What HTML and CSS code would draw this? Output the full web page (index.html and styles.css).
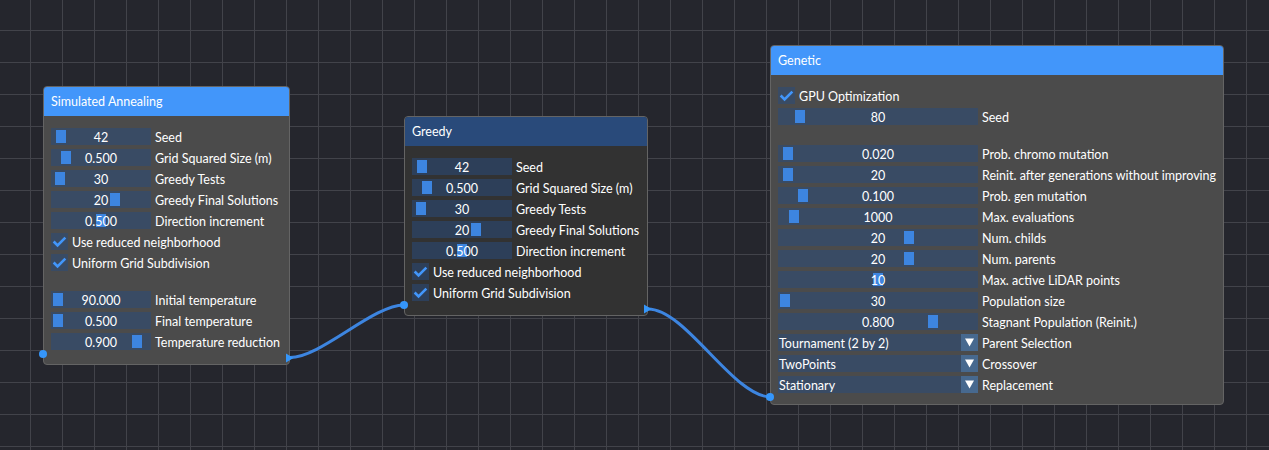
FILE: index.html
```html
<!DOCTYPE html>
<html>
<head>
<meta charset="utf-8">
<title>Node editor</title>
<link rel="stylesheet" href="styles.css">
</head>
<body>
<div class="canvas">
  <svg class="links" width="1269" height="450" viewBox="0 0 1269 450">
    <path d="M290 357.5 C321 357.5 373 305 404 305"/>
    <path d="M648 309 C686 309 733 397 771 397"/>
  </svg>

  <div class="node node-sa">
    <div class="title">Simulated Annealing</div>
    <div class="body">
      <div class="row"><div class="frame"><span class="grab" style="left:5px"></span><span class="val">42</span></div><span class="label">Seed</span></div>
      <div class="row"><div class="frame"><span class="grab" style="left:10px"></span><span class="val">0.500</span></div><span class="label">Grid Squared Size (m)</span></div>
      <div class="row"><div class="frame"><span class="grab" style="left:4px"></span><span class="val">30</span></div><span class="label">Greedy Tests</span></div>
      <div class="row"><div class="frame"><span class="grab" style="left:59px"></span><span class="val">20</span></div><span class="label">Greedy Final Solutions</span></div>
      <div class="row"><div class="frame"><span class="grab" style="left:45px"></span><span class="val">0.500</span></div><span class="label">Direction increment</span></div>
      <div class="row"><span class="check"><svg width="17" height="17" viewBox="0 0 17 17"><polyline points="2.65,8.5 6.55,12.4 14.35,4.6"/></svg></span><span class="label">Use reduced neighborhood</span></div>
      <div class="row"><span class="check"><svg width="17" height="17" viewBox="0 0 17 17"><polyline points="2.65,8.5 6.55,12.4 14.35,4.6"/></svg></span><span class="label">Uniform Grid Subdivision</span></div>
      <div class="spacer"></div>
      <div class="row"><div class="frame"><span class="grab" style="left:2px"></span><span class="val">90.000</span></div><span class="label">Initial temperature</span></div>
      <div class="row"><div class="frame"><span class="grab" style="left:2px"></span><span class="val">0.500</span></div><span class="label">Final temperature</span></div>
      <div class="row"><div class="frame"><span class="grab" style="left:81px"></span><span class="val">0.900</span></div><span class="label">Temperature reduction</span></div>
    </div>
    <div class="pins pins-io">
      <span class="pin-in"></span>
      <svg class="pin-out" width="10" height="10" viewBox="0 0 10 10"><polygon points="1,0.5 1,9.5 8.5,5"/></svg>
    </div>
  </div>

  <div class="node node-greedy idle">
    <div class="title">Greedy</div>
    <div class="body">
      <div class="row"><div class="frame"><span class="grab" style="left:5px"></span><span class="val">42</span></div><span class="label">Seed</span></div>
      <div class="row"><div class="frame"><span class="grab" style="left:10px"></span><span class="val">0.500</span></div><span class="label">Grid Squared Size (m)</span></div>
      <div class="row"><div class="frame"><span class="grab" style="left:4px"></span><span class="val">30</span></div><span class="label">Greedy Tests</span></div>
      <div class="row"><div class="frame"><span class="grab" style="left:59px"></span><span class="val">20</span></div><span class="label">Greedy Final Solutions</span></div>
      <div class="row"><div class="frame"><span class="grab" style="left:45px"></span><span class="val">0.500</span></div><span class="label">Direction increment</span></div>
      <div class="row"><span class="check"><svg width="17" height="17" viewBox="0 0 17 17"><polyline points="2.65,8.5 6.55,12.4 14.35,4.6"/></svg></span><span class="label">Use reduced neighborhood</span></div>
      <div class="row"><span class="check"><svg width="17" height="17" viewBox="0 0 17 17"><polyline points="2.65,8.5 6.55,12.4 14.35,4.6"/></svg></span><span class="label">Uniform Grid Subdivision</span></div>
    </div>
    <div class="pins pins-io">
      <span class="pin-in"></span>
      <svg class="pin-out" width="10" height="10" viewBox="0 0 10 10"><polygon points="1,0.5 1,9.5 8.5,5"/></svg>
    </div>
  </div>

  <div class="node node-genetic">
    <div class="title">Genetic</div>
    <div class="body">
      <div class="row"><span class="check"><svg width="17" height="17" viewBox="0 0 17 17"><polyline points="2.65,8.5 6.55,12.4 14.35,4.6"/></svg></span><span class="label">GPU Optimization</span></div>
      <div class="row"><div class="frame wide"><span class="grab" style="left:17px"></span><span class="val">80</span></div><span class="label">Seed</span></div>
      <div class="spacer"></div>
      <div class="row"><div class="frame wide"><span class="grab" style="left:5px"></span><span class="val">0.020</span></div><span class="label">Prob. chromo mutation</span></div>
      <div class="row"><div class="frame wide"><span class="grab" style="left:5px"></span><span class="val">20</span></div><span class="label">Reinit. after generations without improving</span></div>
      <div class="row"><div class="frame wide"><span class="grab" style="left:20px"></span><span class="val">0.100</span></div><span class="label">Prob. gen mutation</span></div>
      <div class="row"><div class="frame wide"><span class="grab" style="left:11px"></span><span class="val">1000</span></div><span class="label">Max. evaluations</span></div>
      <div class="row"><div class="frame wide"><span class="grab" style="left:126px"></span><span class="val">20</span></div><span class="label">Num. childs</span></div>
      <div class="row"><div class="frame wide"><span class="grab" style="left:126px"></span><span class="val">20</span></div><span class="label">Num. parents</span></div>
      <div class="row"><div class="frame wide"><span class="grab" style="left:95px"></span><span class="val">10</span></div><span class="label">Max. active LiDAR points</span></div>
      <div class="row"><div class="frame wide"><span class="grab" style="left:2px"></span><span class="val">30</span></div><span class="label">Population size</span></div>
      <div class="row"><div class="frame wide"><span class="grab" style="left:150px"></span><span class="val">0.800</span></div><span class="label">Stagnant Population (Reinit.)</span></div>
      <div class="row"><div class="frame wide combo"><span class="combo-text">Tournament (2 by 2)</span><span class="arrow"><svg width="17" height="17" viewBox="0 0 17 17"><polygon points="4,4.6 13,4.6 8.5,12.4"/></svg></span></div><span class="label">Parent Selection</span></div>
      <div class="row"><div class="frame wide combo"><span class="combo-text">TwoPoints</span><span class="arrow"><svg width="17" height="17" viewBox="0 0 17 17"><polygon points="4,4.6 13,4.6 8.5,12.4"/></svg></span></div><span class="label">Crossover</span></div>
      <div class="row"><div class="frame wide combo"><span class="combo-text">Stationary</span><span class="arrow"><svg width="17" height="17" viewBox="0 0 17 17"><polygon points="4,4.6 13,4.6 8.5,12.4"/></svg></span></div><span class="label">Replacement</span></div>
    </div>
    <div class="pins pins-i">
      <span class="pin-in"></span>
    </div>
  </div>
</div>
</body>
</html>
```

FILE: styles.css
```css
* {
  box-sizing: border-box;
  margin: 0;
  padding: 0;
}

html, body {
  width: 1269px;
  height: 450px;
  overflow: hidden;
}

body {
  background: #25262d;
  font-family: Lato, "Noto Sans", sans-serif;
  font-size: 12.5px;
  color: #ffffff;
}

.canvas {
  position: relative;
  width: 1269px;
  height: 450px;
  background-color: #25262d;
  background-image:
    linear-gradient(to right, #42434a 1px, transparent 1px),
    linear-gradient(to bottom, #42434a 1px, transparent 1px);
  background-size: 32px 32px;
  background-position: 30px 30px;
}

.links {
  position: absolute;
  left: 0;
  top: 0;
}

.links path {
  fill: none;
  stroke: #3d85e0;
  stroke-width: 3;
  stroke-linecap: round;
}

/* nodes live on a free canvas */
.node {
  position: absolute;
  background: #4b4b4b;
  border: 1px solid #646464;
  border-radius: 4px;
}

.node-sa {
  left: 43px;
  top: 86px;
  width: 247px;
}

.node-greedy {
  left: 404px;
  top: 116px;
  width: 244px;
}

.node-genetic {
  left: 770px;
  top: 45px;
  width: 454px;
}

.node.idle {
  background: #323232;
}

.title {
  height: 29px;
  background: #4296fa;
  border-radius: 3px 3px 0 0;
  padding: 0 7px;
  display: flex;
  align-items: center;
  white-space: nowrap;
  line-height: 17px;
}

.idle .title {
  background: #294a7a;
}

.body {
  padding: 12px 7px 0 7px;
  display: flex;
  flex-direction: column;
  gap: 4px;
}

.row {
  display: flex;
  align-items: flex-start;
  gap: 4px;
  height: 17px;
}

.frame {
  position: relative;
  flex: none;
  width: 100px;
  height: 17px;
  background: #394b64;
}

.idle .frame,
.idle .check {
  background: #2d3f59;
}

.frame.wide {
  width: 200px;
}

.grab {
  position: absolute;
  top: 2px;
  width: 10px;
  height: 13px;
  background: #3d85e0;
}

.val {
  position: relative;
  display: block;
  text-align: center;
  line-height: 17px;
  padding-top: 1px;
  white-space: nowrap;
}

.label {
  line-height: 17px;
  padding-top: 1px;
  white-space: nowrap;
}

.check {
  flex: none;
  width: 17px;
  height: 17px;
  background: #394b64;
  display: block;
}

.check svg {
  display: block;
}

.check polyline {
  fill: none;
  stroke: #4296fa;
  stroke-width: 2.6;
  stroke-linejoin: miter;
}

.spacer {
  height: 12px;
}

.combo {
  display: flex;
  align-items: flex-start;
}

.combo-text {
  flex: 1;
  padding: 1px 0 0 1px;
  line-height: 17px;
  white-space: nowrap;
}

.arrow {
  flex: none;
  width: 17px;
  height: 17px;
  background: #47698f;
}

.arrow svg {
  display: block;
}

.arrow polygon {
  fill: #ffffff;
}

.pins {
  position: relative;
}

.pins-io {
  height: 14px;
}

.pins-i {
  height: 11px;
}

.pin-in {
  position: absolute;
  left: -5px;
  top: -0.5px;
  width: 8px;
  height: 8px;
  border-radius: 50%;
  background: #3596fa;
}

.pin-out {
  position: absolute;
  right: -6px;
  top: 2.5px;
}

.pin-out polygon {
  fill: #3596fa;
}
```
